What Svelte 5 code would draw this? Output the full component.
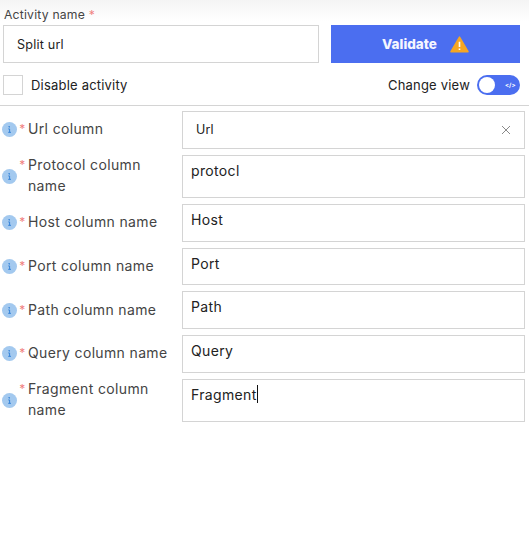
<script>
  const rows = [
    { label: 'Protocol column name', value: 'protocl', tall: true },
    { label: 'Host column name', value: 'Host' },
    { label: 'Port column name', value: 'Port' },
    { label: 'Path column name', value: 'Path' },
    { label: 'Query column name', value: 'Query' },
    { label: 'Fragment column name', value: 'Fragment', tall: true, caret: true }
  ];
</script>

{#snippet info()}
  <svg class="info" viewBox="0 0 16 16" aria-hidden="true">
    <circle cx="8" cy="8" r="8" fill="#a3c9ef" />
    <path d="M6.8 5h1.6M8 5v0.8M6.7 7.4H8.1V11M6.6 11h3" fill="none" stroke="#2f7fd6" stroke-width="1" />
  </svg>
{/snippet}

<div class="page">
  <div class="name-label">Activity name <span class="req">*</span></div>
  <div class="top">
    <div class="name-box">Split url</div>
    <button class="validate">
      <span>Validate</span>
      <svg class="warn" viewBox="0 0 20 18" aria-hidden="true">
        <path d="M10 1.2 L19 16.6 H1 Z" fill="#f5a623" stroke="#f5a623" stroke-width="1.6" stroke-linejoin="round" />
        <path d="M10 6v5.6M10 13.2v1.6" stroke="#fff" stroke-width="1.7" />
      </svg>
    </button>
  </div>
  <div class="options">
    <div class="check-wrap">
      <span class="check"></span>
      <span>Disable activity</span>
    </div>
    <div class="view-wrap">
      <span>Change view</span>
      <span class="toggle">
        <span class="knob"></span>
        <span class="code">&lt;/&gt;</span>
      </span>
    </div>
  </div>
  <div class="form">
    <div class="row first">
      <div class="label">
        {@render info()}
        <span class="req big">*</span>
        <span class="text">Url column</span>
      </div>
      <div class="field select">
        <span>Url</span>
        <svg class="x" viewBox="0 0 10 10" aria-hidden="true">
          <path d="M1 1l8 8M9 1l-8 8" stroke="#8a8a8a" stroke-width="1" fill="none" />
        </svg>
      </div>
    </div>
    {#each rows as row}
      <div class="row" class:tall={row.tall}>
        <div class="label">
          {@render info()}
          <span class="req big">*</span>
          <span class="text">{row.label}</span>
        </div>
        <div class="field"><span>{row.value}</span>{#if row.caret}<span class="caret"></span>{/if}</div>
      </div>
    {/each}
  </div>
</div>

<style>
  :global(body) {
    margin: 0;
    background: #fff;
  }
  .page {
    width: 529px;
    height: 541px;
    box-sizing: border-box;
    overflow: hidden;
    font-family: Inter, sans-serif;
    font-size: 13px;
    letter-spacing: 0.2px;
    color: #222;
    background: linear-gradient(#f4f4f4, #fff 22px);
  }
  .name-label {
    padding: 5px 0 0 4px;
    height: 20px;
    font-size: 12.2px;
    line-height: 19px;
    color: #444;
  }
  .req {
    color: #f08080;
  }
  .top {
    display: flex;
    padding-left: 3px;
    gap: 12px;
  }
  .name-box {
    width: 316px;
    height: 38px;
    box-sizing: border-box;
    border: 1px solid #d4d4d4;
    background: #fff;
    padding-left: 13px;
    line-height: 37px;
    font-size: 12.6px;
  }
  .validate {
    width: 189px;
    height: 38px;
    border: 0;
    background: #4b6ef0;
    color: #f4f6ff;
    font-family: inherit;
    font-size: 13.5px;
    font-weight: 800;
    display: flex;
    align-items: center;
    justify-content: center;
    gap: 13px;
    padding: 0;
  }
  .warn {
    width: 19px;
    height: 17px;
  }
  .options {
    display: flex;
    justify-content: space-between;
    align-items: center;
    height: 30px;
    margin-top: 7px;
    padding: 0 9px 0 3px;
  }
  .check-wrap,
  .view-wrap {
    display: flex;
    align-items: center;
  }
  .check-wrap {
    gap: 8px;
  }
  .view-wrap {
    gap: 7px;
  }
  .check {
    width: 20px;
    height: 20px;
    box-sizing: border-box;
    border: 1px solid #d4d4d4;
    background: #fff;
  }
  .toggle {
    width: 43px;
    height: 20px;
    border-radius: 10px;
    background: #4b6ef0;
    position: relative;
    display: block;
  }
  .knob {
    position: absolute;
    left: 2px;
    top: 2px;
    width: 16px;
    height: 16px;
    border-radius: 50%;
    background: #fff;
  }
  .code {
    position: absolute;
    left: 28px;
    top: 0;
    font-size: 6px;
    line-height: 20px;
    font-weight: 700;
    color: #fff;
    letter-spacing: 0;
  }
  .form {
    border-top: 1px solid #d4d4d4;
    margin-top: 5px;
    padding-top: 5px;
    display: flex;
    flex-direction: column;
    gap: 6px;
    font-size: 14px;
    letter-spacing: 0.35px;
  }
  .row {
    display: flex;
    align-items: center;
    height: 37.75px;
    padding: 0 4px 0 2px;
  }
  .row.tall {
    height: 43px;
  }
  .label {
    width: 180px;
    display: flex;
    align-items: center;
    position: relative;
    color: #444;
    line-height: 21px;
  }
  .info {
    width: 15px;
    height: 15px;
    flex: none;
  }
  .big {
    align-self: flex-start;
    width: 11px;
    text-align: center;
    line-height: 18px;
    font-size: 12px;
    flex: none;
  }
  .text {
    width: 145px;
    margin-top: -2px;
  }
  .field {
    flex: 1;
    height: 100%;
    box-sizing: border-box;
    border: 1px solid #d4d4d4;
    background: #fff;
    padding: 5px 8px 0;
    line-height: 20px;
    color: #222;
    display: flex;
  }
  .field.select {
    align-items: center;
    justify-content: space-between;
    padding: 0 13px 0 13px;
    font-size: 12.5px;
    letter-spacing: 0.2px;
  }
  .x {
    width: 10px;
    height: 10px;
  }
  .caret {
    width: 1px;
    height: 18px;
    background: #111;
  }
</style>
